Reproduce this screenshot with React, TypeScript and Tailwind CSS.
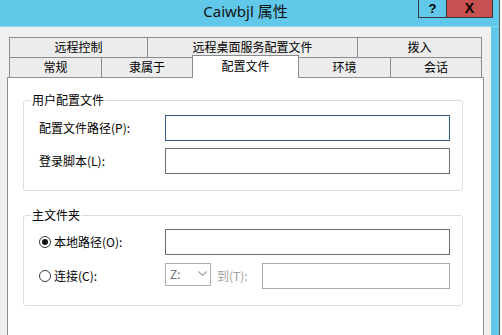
import React from "react";

const font = { fontFamily: '"Noto Sans CJK SC", "Noto Sans", sans-serif' };

function Tab({ w, label, cls = "" }: { w: string; label: string; cls?: string }) {
  return (
    <div className={`${w} h-[20px] bg-[#ececec] border-[#8c8c8c] flex items-center justify-center text-[12px] leading-[16px] text-black ${cls}`}>
      {label}
    </div>
  );
}

function TextBox({ cls }: { cls: string }) {
  return <div className={`h-[26px] bg-white border ${cls}`} />;
}

function Radio({ checked }: { checked?: boolean }) {
  return (
    <div className="w-[12px] h-[12px] rounded-full border border-[#3a3a3a] bg-white flex items-center justify-center">
      {checked && <div className="w-[6px] h-[6px] rounded-full bg-[#111]" />}
    </div>
  );
}

export default function App() {
  return (
    <div className="w-[502px] h-[335px] overflow-hidden flex bg-white" style={font}>
      <div className="w-[499px] flex flex-col">
        {/* title bar */}
        <div className="h-[27px] bg-[#62c8ea] relative flex border-b border-[#8fd6ef]">
          <div
            className="w-[491px] flex items-center justify-center pb-[3px] text-[15px] text-[#111]"
            style={{ fontFamily: '"Noto Sans", "Noto Sans CJK SC", sans-serif' }}
          >
            Caiwbjl 属性
          </div>
          <div className="absolute top-0 right-[6px] flex h-[18px]">
            <div className="w-[28px] h-[18px] border-l border-b border-[#3a3a3a] flex items-center justify-center text-[13px] font-bold text-black" style={{ fontFamily: '"Liberation Sans", sans-serif' }}>
              ?
            </div>
            <div className="w-[47px] h-[18px] bg-[#c75050] border-l border-r border-b border-[#3a3a3a] flex items-center justify-center text-[14px] font-bold text-black" style={{ fontFamily: '"Liberation Sans", sans-serif' }}>
              X
            </div>
          </div>
        </div>
        {/* body */}
        <div className="flex flex-1">
          <div className="w-[491px] bg-[#f0f0f0] pt-[10px] pl-[7px]">
            <div className="ml-[2px] w-[473px]">
              <div className="flex h-[20px]">
                <Tab w="w-[138px]" label="远程控制" cls="border-l border-t" />
                <Tab w="w-[210px]" label="远程桌面服务配置文件" cls="border-l border-t" />
                <Tab w="w-[125px]" label="拨入" cls="border-l border-t border-r" />
              </div>
              <div className="flex h-[20px] items-start">
                <Tab w="w-[92px]" label="常规" cls="border-l border-t" />
                <Tab w="w-[91px]" label="隶属于" cls="border-l border-t" />
                <div className="relative z-10 w-[107px] h-[23px] -mt-[2px] bg-white border-l border-t border-r border-[#8c8c8c] flex justify-center pt-[2px] text-[12px] leading-[16px] text-black">
                  配置文件
                </div>
                <Tab w="w-[91px]" label="环境" cls="border-t" />
                <Tab w="w-[92px]" label="会话" cls="border-l border-t border-r" />
              </div>
            </div>
            <div className="w-[477px] h-[270px] bg-white border border-[#8e8f8f] text-[12px] leading-[16px] text-black">
              {/* 用户配置文件 */}
              <div className="relative mt-[22px] ml-[15px] w-[440px] h-[91px] border border-[#d9dde2] rounded-[3px] pt-[14px] pl-[15px] flex flex-col gap-[7px]">
                <span className="absolute left-[7px] -top-[9px] bg-white px-[1px]">用户配置文件</span>
                <div className="flex items-center h-[26px]">
                  <div className="w-[126px]">配置文件路径(P):</div>
                  <div className="w-[285px]"><TextBox cls="border-[#2f5e8c]" /></div>
                </div>
                <div className="flex items-center h-[26px]">
                  <div className="w-[126px]">登录脚本(L):</div>
                  <div className="w-[285px]"><TextBox cls="border-[#6e6e6e]" /></div>
                </div>
              </div>
              {/* 主文件夹 */}
              <div className="relative mt-[24px] ml-[15px] w-[440px] h-[91px] border border-[#d9dde2] rounded-[3px] pt-[13px] pl-[15px] flex flex-col gap-[8px]">
                <span className="absolute left-[7px] -top-[9px] bg-white px-[1px]">主文件夹</span>
                <div className="flex items-center h-[26px]">
                  <div className="w-[126px] flex items-center gap-[3px]">
                    <Radio checked />
                    <span>本地路径(O):</span>
                  </div>
                  <div className="w-[285px]"><TextBox cls="border-[#6e6e6e]" /></div>
                </div>
                <div className="flex items-start h-[26px]">
                  <div className="w-[126px] h-[26px] flex items-center gap-[3px]">
                    <Radio />
                    <span>连接(C):</span>
                  </div>
                  <div className="w-[46px] h-[23px] border border-[#adadad] flex items-center justify-between pl-[4px] pr-[3px] text-[#707070]">
                    <span>Z:</span>
                    <svg width="9" height="6" viewBox="0 0 9 6">
                      <path d="M0.5 0.5 L4.5 4.5 L8.5 0.5" fill="none" stroke="#a0a0a0" strokeWidth="1.2" />
                    </svg>
                  </div>
                  <div className="ml-[6px] w-[45px] h-[26px] flex items-center text-[#a0a0a0]">到(T):</div>
                  <div className="w-[188px] h-[26px] border border-[#ababab] bg-white" />
                </div>
              </div>
            </div>
          </div>
          <div className="w-[8px] bg-[#62c8ea]" />
        </div>
      </div>
      <div className="w-[3px] bg-[#f6f6f6] border-l border-[#5a5a5a]" />
    </div>
  );
}
